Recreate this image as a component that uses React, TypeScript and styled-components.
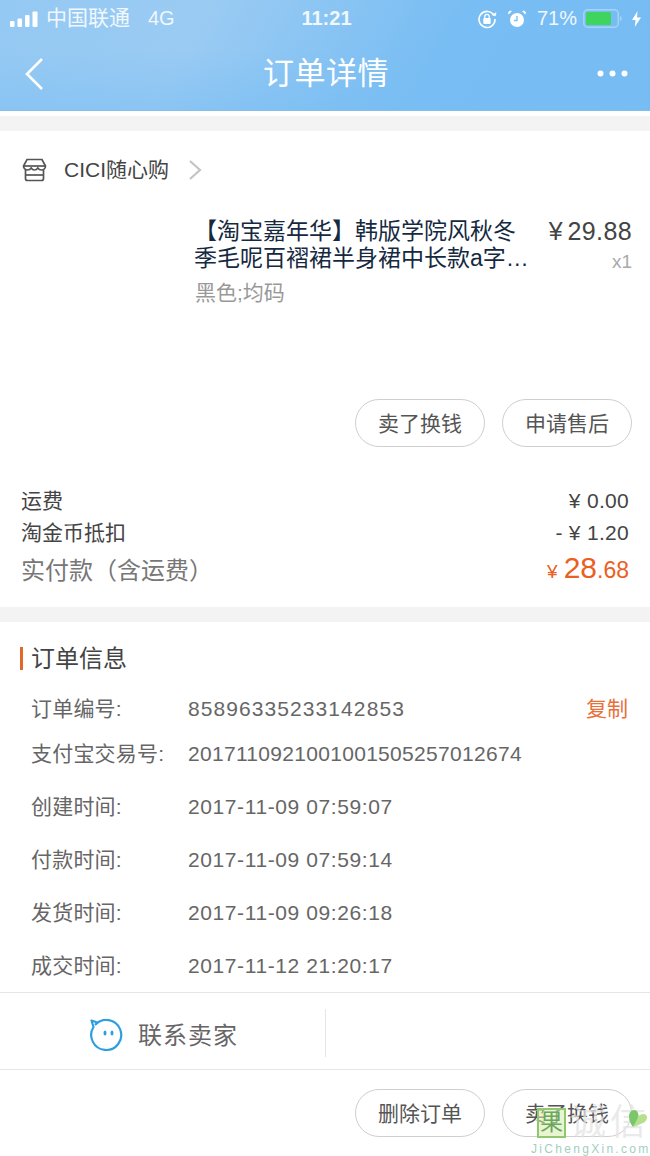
import React from 'react';
import styled, { createGlobalStyle } from 'styled-components';

const GlobalStyle = createGlobalStyle`
  html, body { margin: 0; padding: 0; background: #fff; }
  body { font-family: "Liberation Sans", "Noto Sans CJK SC", sans-serif; }
`;

const Page = styled.div`
  position: relative;
  width: 650px;
  height: 1156px;
  overflow: hidden;
  background: #fff;
`;

const Header = styled.header`
  height: 110px;
  background:
    linear-gradient(to bottom, rgba(120, 189, 243, 0) 45%, rgba(120, 189, 243, 0.45) 100%),
    linear-gradient(120deg, #94c9f3 0%, #9acbf3 30%, #78bdf3 66%, #76bcf3 100%);
  border-bottom: 1px solid #84bee9;
  color: #fff;
`;

const StatusBar = styled.div`
  height: 37px;
  display: flex;
  align-items: center;
  justify-content: space-between;
  padding: 0 9px 0 10px;
  color: #f0f7fd;
`;

const StatusSide = styled.div<{ $end?: boolean }>`
  width: 260px;
  display: flex;
  align-items: center;
  justify-content: ${(p) => (p.$end ? 'flex-end' : 'flex-start')};
`;

const Carrier = styled.span`
  margin: 0 0 6px 7px;
  font-size: 21px;
`;

const Network = styled.span`
  margin-left: 18px;
  font-size: 20px;
`;

const Clock = styled.span`
  margin-left: 2px;
  font-size: 20px;
  font-weight: 700;
`;

const Percent = styled.span`
  margin: 0 6px 0 10px;
  font-size: 20px;
`;

const IconGap = styled.span`
  width: 10px;
`;

const BoltSlot = styled.span`
  display: flex;
  margin-left: 9px;
`;

const NavBar = styled.div`
  height: 73px;
  display: grid;
  grid-template-columns: 1fr auto 1fr;
  align-items: center;
  padding: 0 22px 2px 24px;
  svg:last-child {
    justify-self: end;
  }
`;

const Title = styled.h1`
  margin: 0 0 6px;
  font-size: 31px;
  font-weight: 400;
  letter-spacing: 0.5px;
`;

const Divider = styled.div<{ $top?: number }>`
  height: 15px;
  margin-top: ${(p) => p.$top ?? 0}px;
  background: #f3f3f3;
`;

const ShopRow = styled.div`
  height: 78px;
  display: flex;
  align-items: center;
  padding-left: 22px;
  color: #444;
  font-size: 21px;
`;

const ShopName = styled.span`
  margin: 0 19px 4px 17px;
`;

const Product = styled.div`
  height: 181px;
  display: flex;
  justify-content: space-between;
  padding: 9px 18px 0 195px;
`;

const ProductInfo = styled.div`
  width: 336px;
`;

const ProductName = styled.div`
  font-size: 23px;
  line-height: 27px;
  color: #15293f;
  margin-left: -1px;
  white-space: nowrap;
`;

const Sku = styled.div`
  margin-top: 7px;
  font-size: 21px;
  line-height: 28px;
  color: #999;
`;

const PriceBox = styled.div`
  text-align: right;
  font-size: 25px;
  line-height: 27px;
  color: #444;
  letter-spacing: 0.4px;
  word-spacing: -3px;
`;

const Quantity = styled.div`
  margin-top: 3px;
  font-size: 19px;
  color: #aaa;
  letter-spacing: 0;
`;

const Actions = styled.div`
  display: flex;
  justify-content: flex-end;
  gap: 17px;
  padding-right: 18px;
`;

const Pill = styled.div`
  width: 130px;
  height: 48px;
  box-sizing: border-box;
  padding-bottom: 3px;
  border: 1px solid #cfcfcf;
  border-radius: 24px;
  display: flex;
  align-items: center;
  justify-content: center;
  font-size: 21px;
  color: #555;
`;

const Fees = styled.div`
  padding: 37px 21px 0 21px;
  height: 123px;
`;

const FeeRow = styled.div`
  height: 32px;
  display: flex;
  align-items: center;
  justify-content: space-between;
  font-size: 21px;
  color: #444;
`;

const FeeLabel = styled.span`
  margin-bottom: 2px;
`;

const FeeValue = styled.span`
  margin-top: 2px;
  letter-spacing: 0.3px;
`;

const TotalRow = styled(FeeRow)`
  height: 40px;
  font-size: 24px;
  color: #777;
`;

const Total = styled.span`
  color: #ea5f23;
  font-size: 23px;
  display: flex;
  align-items: baseline;
`;

const TotalYen = styled.span`
  font-size: 19px;
  margin-right: 6px;
`;

const TotalMain = styled.span`
  font-size: 30px;
`;

const SectionTitle = styled.div`
  height: 68px;
  margin-left: 20px;
  display: flex;
  align-items: center;
  font-size: 24px;
  color: #444;
`;

const TitleMark = styled.i`
  width: 3px;
  height: 23px;
  margin: 4px 8px 0 0;
  background: #e0682a;
`;

const InfoList = styled.div`
  padding: 0 22px 0 31px;
`;

const InfoRow = styled.div<{ $h: number }>`
  height: ${(p) => p.$h}px;
  display: flex;
  align-items: center;
  font-size: 21px;
  color: #666;
`;

const InfoLabel = styled.span`
  width: 157px;
  flex: none;
  margin-bottom: 4px;
  letter-spacing: 0.2px;
`;

const InfoValue = styled.span<{ $spacing: number }>`
  flex: 1;
  letter-spacing: ${(p) => p.$spacing}px;
`;

const CopyLink = styled.span`
  margin-bottom: 4px;
  color: #e8703a;
`;

const Contact = styled.div`
  height: 76px;
  border-top: 1px solid #e6e6e6;
  border-bottom: 1px solid #e6e6e6;
  display: flex;
  align-items: center;
`;

const ContactLeft = styled.div`
  width: 326px;
  height: 48px;
  margin-top: 4px;
  border-right: 1px solid #e6e6e6;
  display: flex;
  align-items: center;
  padding-left: 89px;
  box-sizing: border-box;
  gap: 15px;
  font-size: 24px;
  letter-spacing: 1px;
  color: #666;
  svg {
    margin-top: 6px;
  }
`;

const Footer = styled.div`
  padding-top: 19px;
`;

/* site watermark laid over the bottom corner */
const Watermark = styled.div`
  position: absolute;
  right: 0;
  bottom: 0;
  width: 120px;
  height: 50px;
  pointer-events: none;
`;

const MarkBox = styled.div`
  position: absolute;
  left: 7px;
  top: 2px;
  width: 29px;
  height: 30px;
  box-sizing: border-box;
  border: 2px solid #8fc86e;
  background: rgba(215, 235, 170, 0.55);
  color: #6aa860;
  font-size: 23px;
  line-height: 25px;
  text-align: center;
`;

const MarkText = styled.div`
  position: absolute;
  left: 40px;
  top: -3px;
  font-size: 36px;
  line-height: 40px;
  letter-spacing: 4px;
  color: rgba(228, 228, 228, 0.75);
  white-space: nowrap;
`;

const MarkUrl = styled.div`
  position: absolute;
  left: 1px;
  bottom: 0;
  font-size: 12px;
  line-height: 13px;
  letter-spacing: 2.3px;
  color: #9fd0c0;
  white-space: nowrap;
`;

const Leaf = styled.svg`
  position: absolute;
  left: 98px;
  top: 3px;
`;

const SignalBars = () => (
  <svg width="29" height="16" viewBox="0 0 29 16" fill="#fff">
    <rect x="0" y="10" width="4.5" height="6" rx="1" />
    <rect x="7.5" y="7.5" width="4.5" height="8.5" rx="1" />
    <rect x="15" y="4" width="4.5" height="12" rx="1" />
    <rect x="22.5" y="0.5" width="5" height="15.5" rx="1" />
  </svg>
);

const LockIcon = () => (
  <svg width="20" height="20" viewBox="0 0 20 20" fill="none" stroke="#fff">
    <path d="M17 6.5A8 8 0 1 0 18 10" strokeWidth="1.6" />
    <path d="M15 5.5l3.5 1.5.5-3.5" fill="#fff" strokeWidth="0.6" />
    <rect x="6.3" y="9" width="7.4" height="6" rx="1" fill="#fff" stroke="none" />
    <path d="M7.8 9V7.5a2.2 2.2 0 0 1 4.4 0V9" strokeWidth="1.3" />
  </svg>
);

const AlarmIcon = () => (
  <svg width="20" height="20" viewBox="0 0 20 20">
    <circle cx="10" cy="11" r="7" fill="#fff" />
    <path d="M10 7v4.5H7" stroke="#7fbff3" strokeWidth="1.4" fill="none" />
    <path d="M1.5 5.5L5 2.2 3 1.5 1 3.5zM18.5 5.5L15 2.2l2-.7 2 2z" fill="#fff" />
  </svg>
);

const Battery = () => (
  <svg width="40" height="20" viewBox="0 0 40 20">
    <rect x="0.8" y="0.8" width="34.5" height="17.4" rx="4" fill="none" stroke="#a5d4f5" strokeWidth="1.5" />
    <rect x="3" y="3" width="25" height="13" rx="1.5" fill="#3ed45e" />
    <path d="M37 7v5c1.2-.4 1.8-1.3 1.8-2.5S38.2 7.4 37 7z" fill="#a5d4f5" />
  </svg>
);

const Bolt = () => (
  <svg width="9" height="16" viewBox="0 0 9 16" fill="#fff">
    <path d="M5.5 0L0 9h3.5L2.8 16 9 6.5H5z" />
  </svg>
);

const BackArrow = () => (
  <svg width="20" height="34" viewBox="0 0 20 34" fill="none" stroke="#fff" strokeWidth="2.6">
    <path d="M18 2L3 17l15 15" />
  </svg>
);

const MoreDots = () => (
  <svg width="31" height="7" viewBox="0 0 31 7" fill="#fff">
    <circle cx="3.5" cy="3.5" r="3" />
    <circle cx="15.5" cy="3.5" r="3" />
    <circle cx="27.5" cy="3.5" r="3" />
  </svg>
);

const ShopIcon = () => (
  <svg width="25" height="24" viewBox="0 0 25 24" fill="none" stroke="#555" strokeWidth="1.7">
    <path d="M5 1.5h15l3.5 6.5c0 2.5-2 4-4 4-1.7 0-2.9-.7-3.700-2-.8 1.3-2 2-3.300 2s-2.500-.7-3.300-2c-.8 1.300-2 2-3.700 2-2 0-4-1.500-4-4z" />
    <path d="M3.5 12v8.500a2 2 0 0 0 2 2h14a2 2 0 0 0 2-2V12" />
    <path d="M1.5 8h22" />
    <path d="M3.5 17h18" />
  </svg>
);

const Chevron = () => (
  <svg width="14" height="22" viewBox="0 0 14 22" fill="none" stroke="#c4c4c4" strokeWidth="2.2">
    <path d="M2 2l10 9-10 9" />
  </svg>
);

const ChatFace = () => (
  <svg width="34" height="34" viewBox="0 0 34 34" fill="none">
    <path d="M6 6A15 15 0 1 1 4.500 8L2.500 1.500 9 3.800" stroke="#2d9fe0" strokeWidth="2.2" strokeLinejoin="round" />
    <ellipse cx="16" cy="14" rx="1.5" ry="2.5" fill="#2d9fe0" />
    <ellipse cx="23" cy="14" rx="1.5" ry="2.5" fill="#2d9fe0" />
  </svg>
);

const infoRows = [
  { label: '支付宝交易号:', value: '2017110921001001505257012674', spacing: 0.3 },
  { label: '创建时间:', value: '2017-11-09 07:59:07', spacing: 0.6 },
  { label: '付款时间:', value: '2017-11-09 07:59:14', spacing: 0.6 },
  { label: '发货时间:', value: '2017-11-09 09:26:18', spacing: 0.6 },
  { label: '成交时间:', value: '2017-11-12 21:20:17', spacing: 0.6 },
];

export default function App() {
  return (
    <Page>
      <GlobalStyle />
      <Header>
        <StatusBar>
          <StatusSide>
            <SignalBars />
            <Carrier>中国联通</Carrier>
            <Network>4G</Network>
          </StatusSide>
          <Clock>11:21</Clock>
          <StatusSide $end>
            <LockIcon />
            <IconGap />
            <AlarmIcon />
            <Percent>71%</Percent>
            <Battery />
            <BoltSlot>
              <Bolt />
            </BoltSlot>
          </StatusSide>
        </StatusBar>
        <NavBar>
          <BackArrow />
          <Title>订单详情</Title>
          <MoreDots />
        </NavBar>
      </Header>
      <Divider $top={5} />
      <ShopRow>
        <ShopIcon />
        <ShopName>CICI随心购</ShopName>
        <Chevron />
      </ShopRow>
      <Product>
        <ProductInfo>
          <ProductName>【淘宝嘉年华】韩版学院风秋冬</ProductName>
          <ProductName>季毛呢百褶裙半身裙中长款a字…</ProductName>
          <Sku>黑色;均码</Sku>
        </ProductInfo>
        <PriceBox>
          ¥ 29.88
          <Quantity>x1</Quantity>
        </PriceBox>
      </Product>
      <Actions>
        <Pill>卖了换钱</Pill>
        <Pill>申请售后</Pill>
      </Actions>
      <Fees>
        <FeeRow>
          <FeeLabel>运费</FeeLabel>
          <FeeValue>¥ 0.00</FeeValue>
        </FeeRow>
        <FeeRow>
          <FeeLabel>淘金币抵扣</FeeLabel>
          <FeeValue>- ¥ 1.20</FeeValue>
        </FeeRow>
        <TotalRow>
          <span>实付款（含运费）</span>
          <Total>
            <TotalYen>¥</TotalYen>
            <TotalMain>28</TotalMain>.68
          </Total>
        </TotalRow>
      </Fees>
      <Divider />
      <SectionTitle>
        <TitleMark />
        订单信息
      </SectionTitle>
      <InfoList>
        <InfoRow $h={37}>
          <InfoLabel>订单编号:</InfoLabel>
          <InfoValue $spacing={1.08}>85896335233142853</InfoValue>
          <CopyLink>复制</CopyLink>
        </InfoRow>
        {infoRows.map((row) => (
          <InfoRow key={row.label} $h={53}>
            <InfoLabel>{row.label}</InfoLabel>
            <InfoValue $spacing={row.spacing}>{row.value}</InfoValue>
          </InfoRow>
        ))}
      </InfoList>
      <Contact>
        <ContactLeft>
          <ChatFace />
          联系卖家
        </ContactLeft>
      </Contact>
      <Footer>
        <Actions>
          <Pill>删除订单</Pill>
          <Pill>卖了换钱</Pill>
        </Actions>
      </Footer>
      <Watermark>
        <MarkBox>果</MarkBox>
        <MarkText>诚信</MarkText>
        <Leaf width="20" height="20" viewBox="0 0 20 20">
          <path d="M6 1c3 0 4.500 3 4.500 6S8 14 5 18C2 14 1 11 1 7c0-3 2-6 5-6z" fill="#7cc66a" />
          <path d="M10 8c2-3 6-4 8-2s1 6-3 8c-3 1.500-7 3-10 4 2-3 4-7 5-10z" fill="#b5e08f" />
        </Leaf>
        <MarkUrl>JiChengXin.com</MarkUrl>
      </Watermark>
    </Page>
  );
}
